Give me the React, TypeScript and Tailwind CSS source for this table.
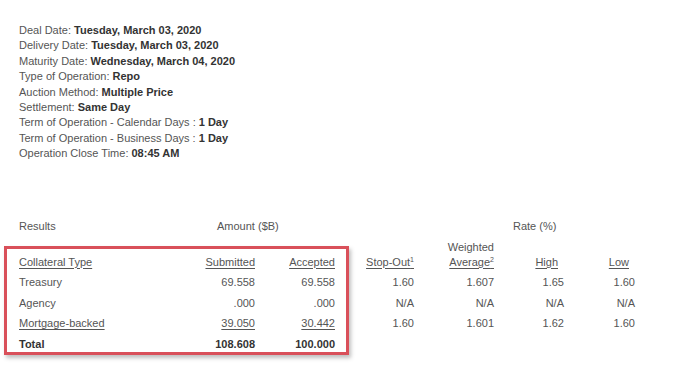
import React from "react";

const info: [string, string][] = [
  ["Deal Date: ", "Tuesday, March 03, 2020"],
  ["Delivery Date: ", "Tuesday, March 03, 2020"],
  ["Maturity Date: ", "Wednesday, March 04, 2020"],
  ["Type of Operation: ", "Repo"],
  ["Auction Method: ", "Multiple Price"],
  ["Settlement: ", "Same Day"],
  ["Term of Operation - Calendar Days : ", "1 Day"],
  ["Term of Operation - Business Days : ", "1 Day"],
  ["Operation Close Time: ", "08:45 AM"],
];

const cols = "grid grid-cols-[156px_80px_80px_79px_80px_70px_71px]";

function Row({ cells, bold, underline }: { cells: string[]; bold?: boolean; underline?: boolean }) {
  return (
    <div className={`${cols} h-[20.4px] items-center`}>
      {cells.map((c, i) => (
        <div
          key={i}
          className={`${i === 0 ? "text-left" : "text-right"} ${bold ? "font-bold text-[#333]" : ""} ${
            underline && i < 3 ? "underline underline-offset-2" : ""
          }`}
        >
          {c}
        </div>
      ))}
    </div>
  );
}

export default function App() {
  return (
    <div
      className="relative w-[680px] h-[372px] bg-white text-[11px] text-[#555] overflow-hidden"
      style={{ fontFamily: '"Liberation Sans", Arial, sans-serif' }}
    >
      <div className="pl-[19px] pt-[23px] leading-[15.4px]">
        {info.map(([l, v]) => (
          <div key={l}>
            {l}
            <span className="font-bold text-[#333]">{v}</span>
          </div>
        ))}
      </div>

      <div className="pl-[19px] mt-[57px] leading-[15px]">
        <div className="flex h-[15px]">
          <div className="w-[198px]">Results</div>
          <div className="w-[296px]">Amount ($B)</div>
          <div>Rate (%)</div>
        </div>
        <div className={`${cols} mt-[6px] h-[30px] items-end`}>
          <div className="underline underline-offset-2">Collateral Type</div>
          <div className="text-right underline underline-offset-2">Submitted</div>
          <div className="text-right underline underline-offset-2">Accepted</div>
          <div className="text-right underline underline-offset-2">
            Stop-Out<sup className="text-[7px]">1</sup>
          </div>
          <div className="text-right">
            <div>Weighted</div>
            <div className="underline underline-offset-2">
              Average<sup className="text-[7px]">2</sup>
            </div>
          </div>
          <div className="text-right pr-[6px] underline underline-offset-2">High</div>
          <div className="text-right pr-[6px] underline underline-offset-2">Low</div>
        </div>
        <div className="mt-[3px]">
          <Row cells={["Treasury", "69.558", "69.558", "1.60", "1.607", "1.65", "1.60"]} />
          <Row cells={["Agency", ".000", ".000", "N/A", "N/A", "N/A", "N/A"]} />
          <Row underline cells={["Mortgage-backed", "39.050", "30.442", "1.60", "1.601", "1.62", "1.60"]} />
          <div className={`${cols} h-[20.4px] items-center font-bold text-[#333]`}>
            <div>Total</div>
            <div className="text-right">108.608</div>
            <div className="text-right">100.000</div>
          </div>
        </div>
      </div>

      <div className="absolute left-[4px] top-[246px] w-[345px] h-[109px] border-[3px] border-[#d9505a] shadow-[2px_3px_4px_rgba(0,0,0,0.25)] pointer-events-none" />
    </div>
  );
}
